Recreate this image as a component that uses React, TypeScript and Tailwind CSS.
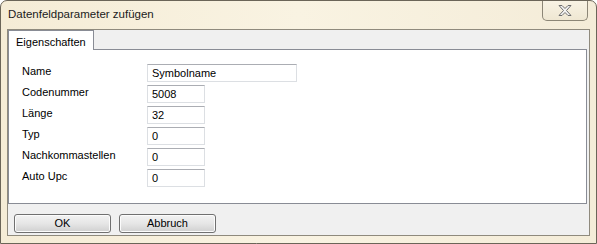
const rows = [
  { label: 'Name', value: 'Symbolname', wide: true },
  { label: 'Codenummer', value: '5008' },
  { label: 'Länge', value: '32' },
  { label: 'Typ', value: '0' },
  { label: 'Nachkommastellen', value: '0' },
  { label: 'Auto Upc', value: '0' },
]

function CloseButton() {
  return (
    <div className="w-[46px] h-[20px] mr-[8px] border border-t-0 border-[#8c8676] rounded-b-[5px] bg-gradient-to-b from-[#f8f3e4] to-[#efe7d2] flex items-center justify-center">
      <svg width="16" height="13" viewBox="0 0 16 13">
        <path
          d="M2 1.5h3l3 3 3-3h3l-4.5 5 4.5 5h-3l-3-3-3 3h-3l4.5-5z"
          fill="#f4f4f4"
          stroke="#6e6e6e"
          strokeWidth="1"
          strokeLinejoin="round"
        />
      </svg>
    </div>
  )
}

export default function App() {
  return (
    <div
      className="w-[597px] h-[244px] flex flex-col border border-[#6b6558] rounded-t-[7px] bg-gradient-to-r from-[#f5ecd6] via-[#f9f3e2] to-[#f4ecd8] text-[11px] text-black"
      style={{ fontFamily: '"Liberation Sans", Arial, sans-serif' }}
    >
      <div className="h-[28px] flex items-start justify-between">
        <div className="pl-[7px] pt-[5px] text-[11.5px] text-[#1b1b1b]">Datenfeldparameter zufügen</div>
        <CloseButton />
      </div>
      <div className="mx-[6px] h-[207px] border border-[#8f8a7d] bg-[#f0f0f0] flex flex-col">
        <div className="flex">
          <div className="h-[20px] px-[7px] pt-[3px] border border-b-0 border-[#898c95] bg-white text-[11px] relative z-10 -mb-px">
            Eigenschaften
          </div>
        </div>
        <div className="h-[155px] mr-[2px] border border-[#898c95] bg-white pl-[13px] pt-[14px]">
          <div className="flex flex-col gap-[3px]">
            {rows.map((r) => (
              <div key={r.label} className="flex h-[18px]">
                <div className="w-[125px] -mt-[1px]">{r.label}</div>
                <div
                  className={`${r.wide ? 'w-[150px]' : 'w-[58px]'} h-[18px] border border-[#dcdfe3] border-t-[#abadb3] bg-white pl-[4px] pt-[2px] leading-[13px]`}
                >
                  {r.value}
                </div>
              </div>
            ))}
          </div>
        </div>
        <div className="flex gap-[8px] pl-[6px] pt-[10px]">
          {['OK', 'Abbruch'].map((b) => (
            <div
              key={b}
              className="w-[97px] h-[19px] border border-[#707070] rounded-[3px] bg-gradient-to-b from-[#f3f3f3] via-[#e6e6e6] to-[#d0d0d0] flex items-center justify-center shadow-[inset_0_0_0_1px_#fcfcfc]"
            >
              {b}
            </div>
          ))}
        </div>
      </div>
    </div>
  )
}
